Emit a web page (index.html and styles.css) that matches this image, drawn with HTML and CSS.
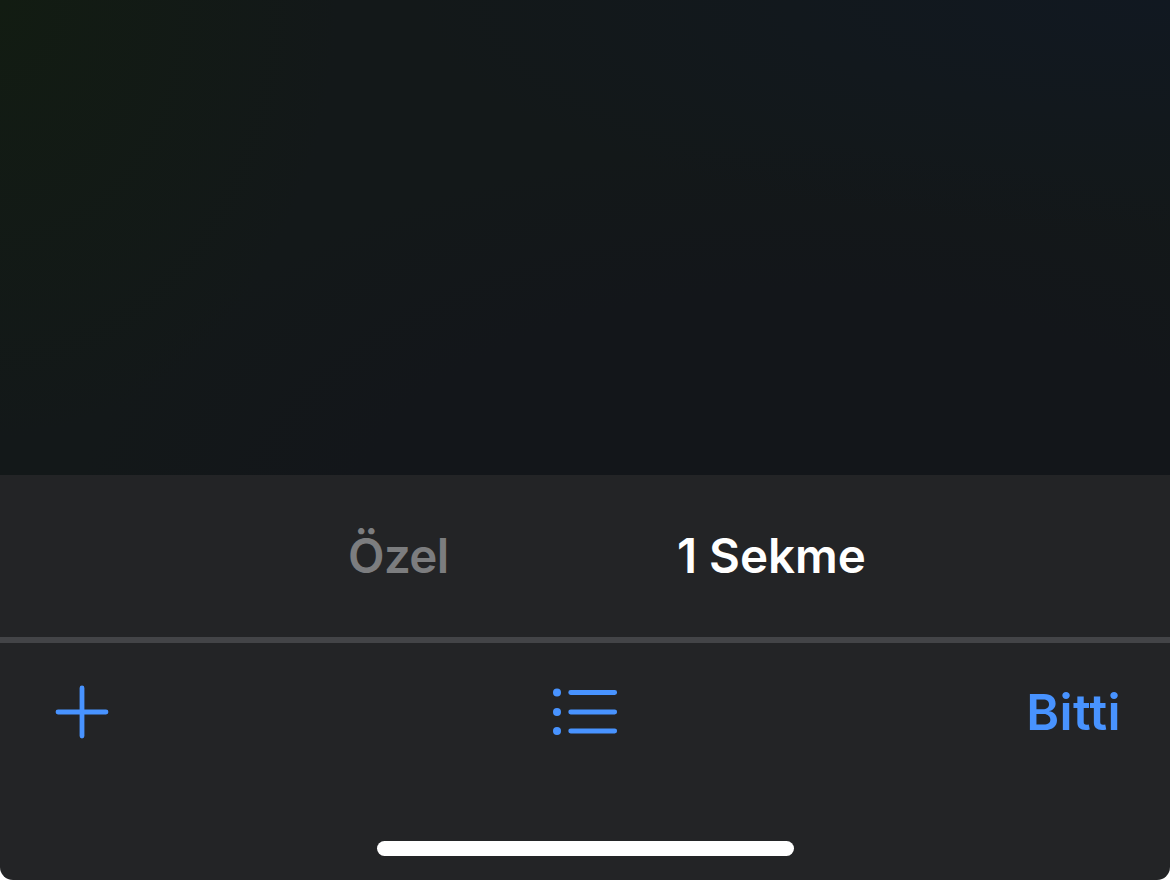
FILE: index.html
```html
<!DOCTYPE html>
<html lang="tr">
<head>
  <meta charset="UTF-8">
  <meta name="viewport" content="width=device-width, initial-scale=1.0">
  <title>Sekmeler</title>
  <link rel="stylesheet" href="styles.css">
</head>
<body>
  <div class="screen">
    <main class="tab-grid"></main>

    <!-- Tab groups -->
    <nav class="tab-groups">
      <button type="button" class="group private">Özel</button>
      <button type="button" class="group active">1 Sekme</button>
    </nav>

    <!-- Bottom toolbar -->
    <footer class="bottom-bar">
      <div class="toolbar">
        <button type="button" class="tool add" aria-label="Yeni sekme">
          <svg width="54" height="54" viewBox="0 0 54 54">
            <path d="M27 3v48M3 27h48" />
          </svg>
        </button>
        <button type="button" class="tool" aria-label="Sekme grupları">
          <svg width="66" height="50" viewBox="0 0 66 50">
            <path d="M18.7 5.5h44M18.7 25h44M18.7 44h44" />
            <circle cx="5" cy="5.5" r="4" />
            <circle cx="5" cy="25" r="4" />
            <circle cx="5" cy="44" r="4" />
          </svg>
        </button>
        <button type="button" class="tool done">Bitti</button>
      </div>
      <div class="home-indicator"></div>
    </footer>
  </div>
</body>
</html>
```
FILE: styles.css
```css
* {
  box-sizing: border-box;
}

body {
  margin: 0;
  background: #fff;
  font-family: Inter, "Liberation Sans", sans-serif;
}

.screen {
  display: flex;
  flex-direction: column;
  height: 880px;
  border-radius: 0 0 13px 13px;
  overflow: hidden;
  background: #232426;
}

.tab-grid {
  height: 475px;
  background:
    radial-gradient(ellipse 340px 440px at 0 0, #121c12 0%, rgba(18, 28, 18, 0) 100%),
    radial-gradient(ellipse 760px 230px at 100% 0, #111821 0%, rgba(17, 24, 33, 0) 100%),
    radial-gradient(ellipse 800px 420px at 68% 110%, #13161a 55%, #131819 90%);
}

button {
  padding: 0;
  border: none;
  background: none;
  font-family: inherit;
  font-weight: 600;
  cursor: pointer;
}

.tab-groups {
  display: flex;
  height: 162px;
  padding-left: 348px;
  align-items: center;
}

.group {
  font-size: 47.5px;
  line-height: 56px;
  color: #fff;
  white-space: nowrap;
}

.group.private {
  width: 329px;
  letter-spacing: -0.6px;
  text-align: left;
  color: #7c7d7f;
}

.bottom-bar {
  display: flex;
  flex-direction: column;
  flex: 1;
  align-items: center;
  justify-content: space-between;
  padding-bottom: 24px;
  border-top: 6px solid #434447;
}

.toolbar {
  display: grid;
  grid-template-columns: 1fr auto 1fr;
  width: 100%;
  height: 138px;
  padding: 0 49px;
  align-items: center;
}

.tool {
  display: flex;
  color: #4893ff;
}

.tool.add {
  padding-left: 6px;
}

.tool svg {
  fill: none;
  stroke: currentColor;
  stroke-width: 4.8;
  stroke-linecap: round;
}

.tool circle {
  fill: currentColor;
  stroke: none;
}

.done {
  justify-self: end;
  font-size: 50px;
  line-height: 60px;
  letter-spacing: 0.4px;
}

.home-indicator {
  width: 417px;
  height: 15px;
  border-radius: 8px;
  background: #fff;
}
```
